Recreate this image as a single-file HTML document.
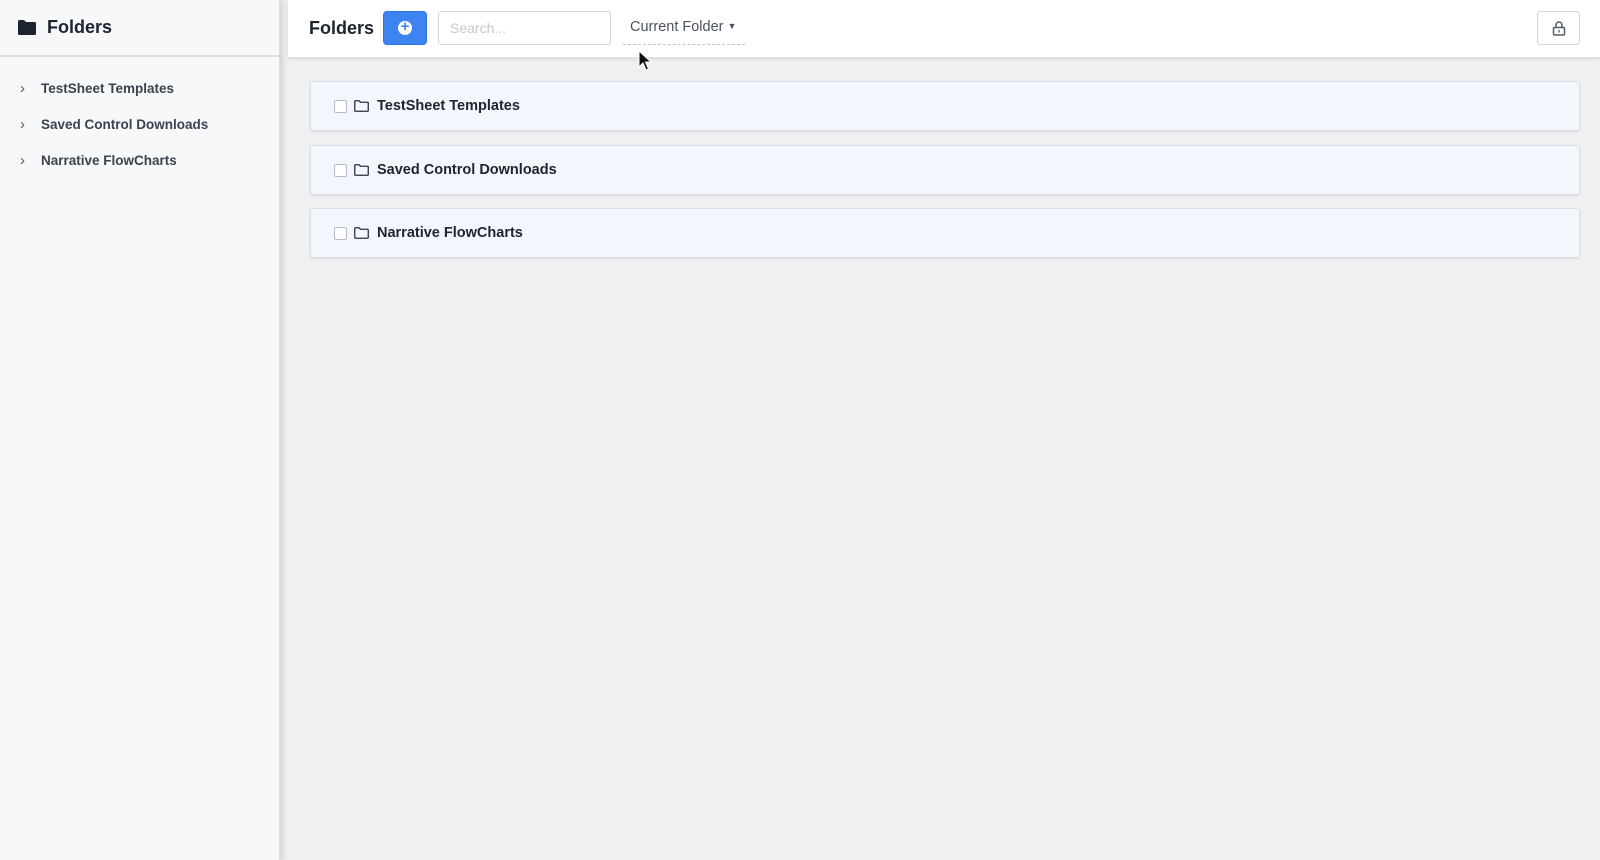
<!DOCTYPE html>
<html><head><style>
*{box-sizing:border-box;margin:0;padding:0}
body{width:1600px;height:860px;overflow:hidden;background:#eff0f2;font-family:"Liberation Sans",sans-serif;position:relative;color:#1c2430}
.side{position:absolute;left:0;top:0;width:280px;height:860px;background:#f7f8fa;border-right:1px solid #dcdde0;box-shadow:3px 0 5px rgba(0,0,0,.12)}
.sh{height:57px;border-bottom:2px solid #dfe0e3;display:flex;align-items:center;padding-left:18px;font-size:18px;font-weight:bold}
.sh svg{margin-right:11px}
.ti{position:absolute;left:20px;font-size:13.5px;font-weight:bold;color:#3a424e;display:flex;align-items:center;white-space:nowrap}
.ti span.c{width:21px;color:#555;font-weight:normal;font-size:15px}
.top{position:absolute;left:288px;right:0;top:0;height:57px;background:#fff;box-shadow:0 2px 4px rgba(0,0,0,.1)}
.t{position:absolute;left:21px;top:18px;font-size:18px;font-weight:bold}
.btn{position:absolute;left:95px;top:11px;width:44px;height:34px;background:#3d84f3;border-radius:4px;border:1px solid #2f72dd}
.btn:after{content:"";position:absolute;left:14px;top:9px;width:14px;height:14px;border-radius:50%;background:#fff}
.btn:before{content:"+";position:absolute;left:15px;top:6px;width:12px;text-align:center;color:#3d84f3;font-weight:bold;font-size:15px;z-index:1}
.search{position:absolute;left:150px;top:11px;width:173px;height:34px;border:1px solid #d3d6db;border-radius:3px;color:#c4c8ce;font-size:14px;padding:8px 11px}
.cf{position:absolute;left:335px;top:11px;width:122px;height:34px;border-bottom:1px dashed #bfc3c8;color:#4a5260;font-size:14.5px;padding:8px 7px;white-space:nowrap}
.lock{position:absolute;right:20px;top:11px;width:43px;height:34px;border:1px solid #d3d6db;border-radius:3px}
.row{position:absolute;left:310px;width:1270px;height:50px;background:#f3f7fd;border:1px solid #dcdfe4;border-radius:3px;box-shadow:0 1px 2px rgba(0,0,0,.1);display:flex;align-items:center;padding-left:23px;font-size:14.5px;font-weight:bold}
.cb{width:13px;height:13px;border:1px solid #b7bcc3;border-radius:2px;background:#fff;margin-right:7px}
.row svg{margin-right:8px}
</style></head><body>
<div class="side">
<div class="sh"><svg width="18" height="15" viewBox="0 0 18 15"><path d="M0 1.5Q0 0 1.5 0H6l2 2h8.5Q18 2 18 3.5V13.5Q18 15 16.5 15H1.5Q0 15 0 13.5Z" fill="#1c2430"/></svg>Folders</div>
<div class="ti" style="top:80px"><span class="c">›</span>TestSheet Templates</div>
<div class="ti" style="top:116px"><span class="c">›</span>Saved Control Downloads</div>
<div class="ti" style="top:152px"><span class="c">›</span>Narrative FlowCharts</div>
</div>
<div class="top">
<div class="t">Folders</div>
<div class="btn"></div>
<div class="search">Search...</div>
<div class="cf">Current Folder <span style="font-size:9px;vertical-align:2px">▼</span></div>
<div class="lock"><svg style="position:absolute;left:14px;top:9px" width="14" height="15" viewBox="0 0 14 15"><path d="M4 6.5V4a3 3 0 0 1 6 0v2.5" fill="none" stroke="#555d68" stroke-width="1.5"/><rect x="1.5" y="6.5" width="11" height="7.5" rx="1" fill="none" stroke="#555d68" stroke-width="1.5"/><rect x="6.3" y="9" width="1.4" height="2.5" fill="#555d68"/></svg></div>
</div>
<div class="row" style="top:81px"><div class="cb"></div><svg width="15" height="12" viewBox="0 0 15 12"><path d="M.75 1.5Q.75.75 1.5.75H5l1.5 1.5h7Q14.25 2.25 14.25 3v7.5q0 .75-.75.75h-12Q.75 11.25.75 10.5Z" fill="none" stroke="#2a323e" stroke-width="1.3"/></svg>TestSheet Templates</div>
<div class="row" style="top:145px"><div class="cb"></div><svg width="15" height="12" viewBox="0 0 15 12"><path d="M.75 1.5Q.75.75 1.5.75H5l1.5 1.5h7Q14.25 2.25 14.25 3v7.5q0 .75-.75.75h-12Q.75 11.25.75 10.5Z" fill="none" stroke="#2a323e" stroke-width="1.3"/></svg>Saved Control Downloads</div>
<div class="row" style="top:208px"><div class="cb"></div><svg width="15" height="12" viewBox="0 0 15 12"><path d="M.75 1.5Q.75.75 1.5.75H5l1.5 1.5h7Q14.25 2.25 14.25 3v7.5q0 .75-.75.75h-12Q.75 11.25.75 10.5Z" fill="none" stroke="#2a323e" stroke-width="1.3"/></svg>Narrative FlowCharts</div>
<svg style="position:absolute;left:638px;top:50px" width="14" height="22" viewBox="0 0 14 22"><path d="M1 1v16l4-4 3 7 2.5-1-3-7h5.5Z" fill="#111" stroke="#fff" stroke-width="1"/></svg>
</body></html>
